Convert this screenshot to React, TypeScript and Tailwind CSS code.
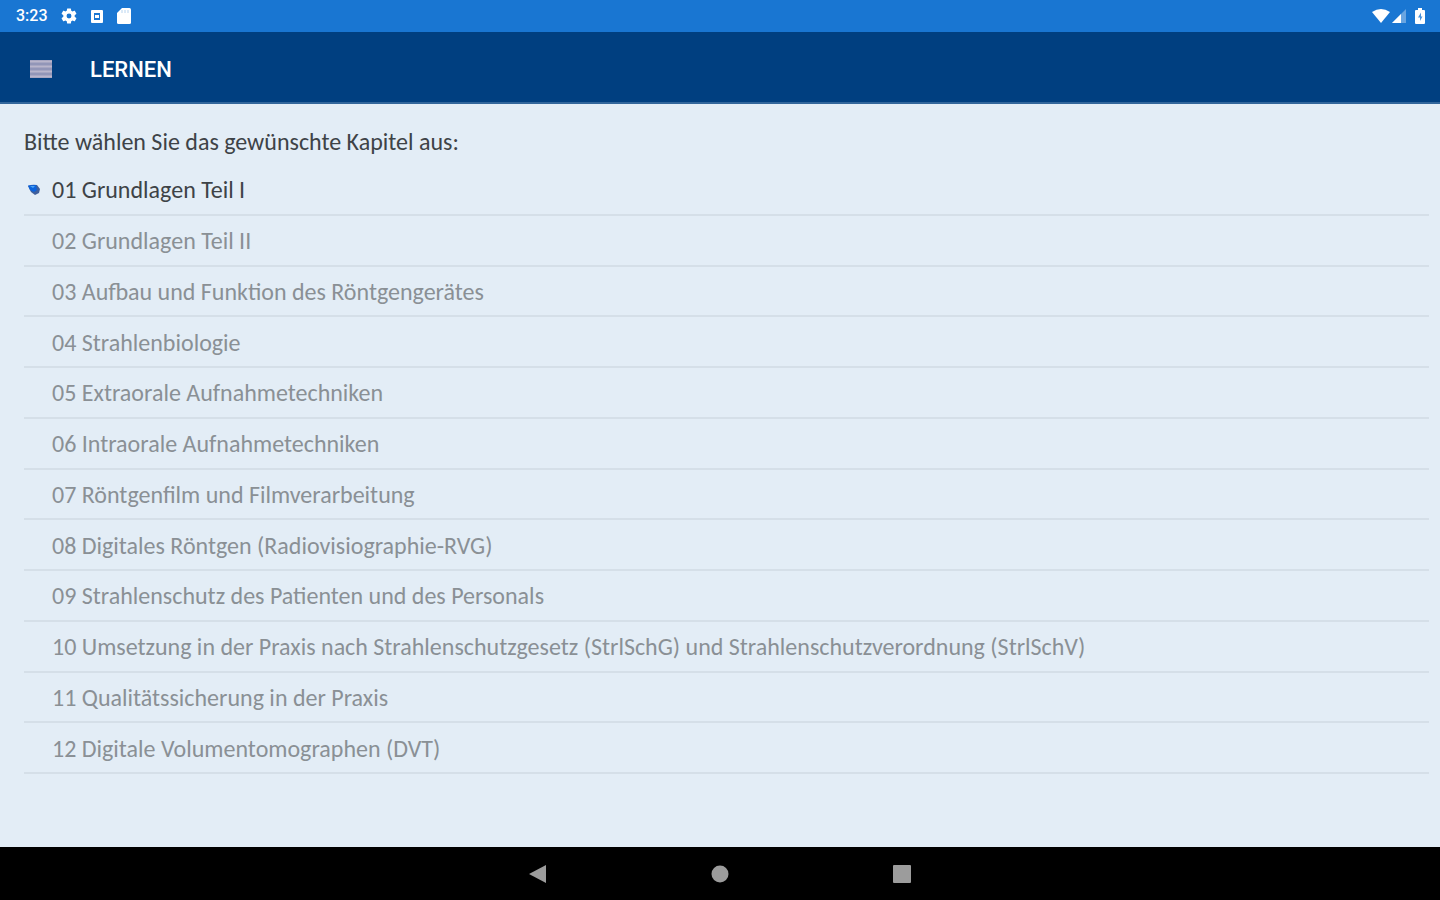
const chapters: string[] = [
  '01 Grundlagen Teil I',
  '02 Grundlagen Teil II',
  '03 Aufbau und Funktion des Röntgengerätes',
  '04 Strahlenbiologie',
  '05 Extraorale Aufnahmetechniken',
  '06 Intraorale Aufnahmetechniken',
  '07 Röntgenfilm und Filmverarbeitung',
  '08 Digitales Röntgen (Radiovisiographie-RVG)',
  '09 Strahlenschutz des Patienten und des Personals',
  '10 Umsetzung in der Praxis nach Strahlenschutzgesetz (StrlSchG) und Strahlenschutzverordnung (StrlSchV)',
  '11 Qualitätssicherung in der Praxis',
  '12 Digitale Volumentomographen (DVT)',
];

function StatusBar() {
  return (
    <div className="flex h-8 items-center justify-between bg-[#1976d2] pr-[15px] pl-4 text-white">
      <div className="flex items-center gap-[13px]">
        <span className="font-[Roboto,sans-serif] text-base leading-5 font-medium">3:23</span>
        <svg className="size-4" viewBox="0 0 24 24" fill="currentColor" aria-hidden="true">
          <path d="M20.5 13.1a8.6 8.6 0 0 0 0-2.2l2.4-1.9a.6.6 0 0 0 .1-.7l-2.3-4a.6.6 0 0 0-.7-.2l-2.8 1.1a8.400 8.400 0 0 0-1.900-1.100L14.900 1.100a.6.6 0 0 0-.6-.5H9.700a.6.6 0 0 0-.6.5L8.700 4.100a8.400 8.400 0 0 0-1.900 1.100L4 4.100a.6.6 0 0 0-.7.2l-2.300 4a.6.6 0 0 0 .1.7l2.400 1.900a8.600 8.600 0 0 0 0 2.200L1.100 15a.6.6 0 0 0-.1.700l2.300 4a.6.6 0 0 0 .7.200l2.800-1.100a8.400 8.400 0 0 0 1.900 1.100l.4 3a.6.6 0 0 0 .6.500h4.600a.6.6 0 0 0 .6-.5l.4-3a8.400 8.400 0 0 0 1.900-1.100l2.800 1.100a.6.6 0 0 0 .7-.2l2.300-4a.6.6 0 0 0-.1-.7zM12 15.700a3.700 3.700 0 1 1 0-7.400 3.700 3.700 0 0 1 0 7.400z" />
        </svg>
        <svg className="size-3.5" viewBox="0 0 14 14" aria-hidden="true">
          <rect x="1" y="1" width="12" height="13" rx="1" fill="currentColor" />
          <path d="M4 4h6v7H4z" fill="#1976d2" />
          <path d="M5 6h4v3H5z" fill="currentColor" />
        </svg>
        <svg className="h-4 w-3.5" viewBox="0 0 14 16" aria-hidden="true">
          <path d="M5 0h7.500Q14 0 14 1.500v13Q14 16 12.500 16h-11Q0 16 0 14.500V5z" fill="currentColor" />
          <path d="M5 2v3M8 2v3M11 2v3" stroke="#1976d2" strokeWidth="1" opacity=".3" />
        </svg>
      </div>
      <div className="flex items-center">
        <svg className="h-4 w-5" viewBox="0 0 20 16" fill="currentColor" aria-hidden="true">
          <path d="M1 4q9-6 18 0l-9 11z" />
        </svg>
        <svg className="h-4 w-4" viewBox="0 0 16 16" fill="currentColor" aria-hidden="true">
          <path d="M15 1v14H1z" opacity=".35" />
          <path d="M10 6v9H1z" />
        </svg>
        <svg className="ml-2 h-4 w-2.5" viewBox="0 0 10 16" aria-hidden="true">
          <path d="M3 0h4v2h2q1 0 1 1v12q0 1-1 1H1q-1 0-1-1V3q0-1 1-1h2z" fill="currentColor" />
          <path d="M6 4.500L3 9.500H5V13l2.500-4.500H6z" fill="#1976d2" opacity=".8" />
        </svg>
      </div>
    </div>
  );
}

function Header() {
  return (
    <header className="flex h-[72px] items-center gap-9 border-b-2 border-[#32669b] bg-[#003f80] px-[30px] pt-1">
      <button type="button" aria-label="Menü" className="flex h-5 w-6 items-center">
        <svg className="h-[18px] w-[22px]" viewBox="0 0 22 18" aria-hidden="true">
          <path d="M0 0h22v18H0z" fill="#9296b8" />
          <path d="M0 1.500h22M0 6.500h22M0 11.500h22M0 16.500h22" stroke="#b9b6cc" strokeWidth="2" />
        </svg>
      </button>
      <h1 className="pt-0.5 font-[Roboto,sans-serif] text-[22px] leading-7 font-medium text-white">LERNEN</h1>
    </header>
  );
}

function Marker() {
  return (
    <svg className="h-3 w-3.5" viewBox="0 0 14 12" aria-hidden="true">
      <path d="M1 2q4-2 9-1l3 4-1 4-4 2-4-3z" fill="#3f5f9c" />
      <path d="M1 1.500l8-.5 1 5-3 2-4-2z" fill="#0b63dc" />
      <path d="M3 2l3 2 2-2" fill="#4aa3f5" />
    </svg>
  );
}

function NavBar() {
  return (
    <nav className="flex h-[53px] items-center justify-center gap-[158px] bg-black text-[#9c9c9c]">
      <button type="button" aria-label="Zurück" className="flex size-6 items-center justify-center">
        <svg className="size-5" viewBox="0 0 20 20" fill="currentColor" aria-hidden="true"><path d="M1 10L18 1v18z" /></svg>
      </button>
      <button type="button" aria-label="Startseite" className="flex size-6 items-center justify-center">
        <svg className="size-[18px]" viewBox="0 0 18 18" fill="currentColor" aria-hidden="true"><circle cx="9" cy="9" r="8.500" /></svg>
      </button>
      <button type="button" aria-label="Übersicht" className="flex size-6 items-center justify-center">
        <svg className="size-[18px]" viewBox="0 0 18 18" fill="currentColor" aria-hidden="true"><rect width="18" height="18" rx="1" /></svg>
      </button>
    </nav>
  );
}

export default function App() {
  return (
    <div className="flex min-h-screen flex-col bg-[#e3edf6] font-[Carlito,Lato,sans-serif]">
      <StatusBar />
      <Header />
      <main className="flex flex-1 flex-col pt-6 pr-[11px] pb-[73px] pl-6 text-2xl leading-7">
        <p className="mb-[9px] leading-7 text-[#3e4347]">Bitte wählen Sie das gewünschte Kapitel aus:</p>
        <ul className="grid flex-1 auto-rows-fr">
          {chapters.map((chapter, index) => (
            <li key={chapter} className="flex border-b-2 border-[#d5dfe8]">
              <button
                type="button"
                className={
                  index === 0
                    ? 'flex w-full items-center pt-0.5 text-left leading-7 text-[#3e4347]'
                    : 'flex w-full items-center pt-0.5 text-left leading-7 text-[#8a9095]'
                }
              >
                <span className="flex w-7 shrink-0 pl-[3px]">{index === 0 && <Marker />}</span>
                {chapter}
              </button>
            </li>
          ))}
        </ul>
      </main>
      <NavBar />
    </div>
  );
}
